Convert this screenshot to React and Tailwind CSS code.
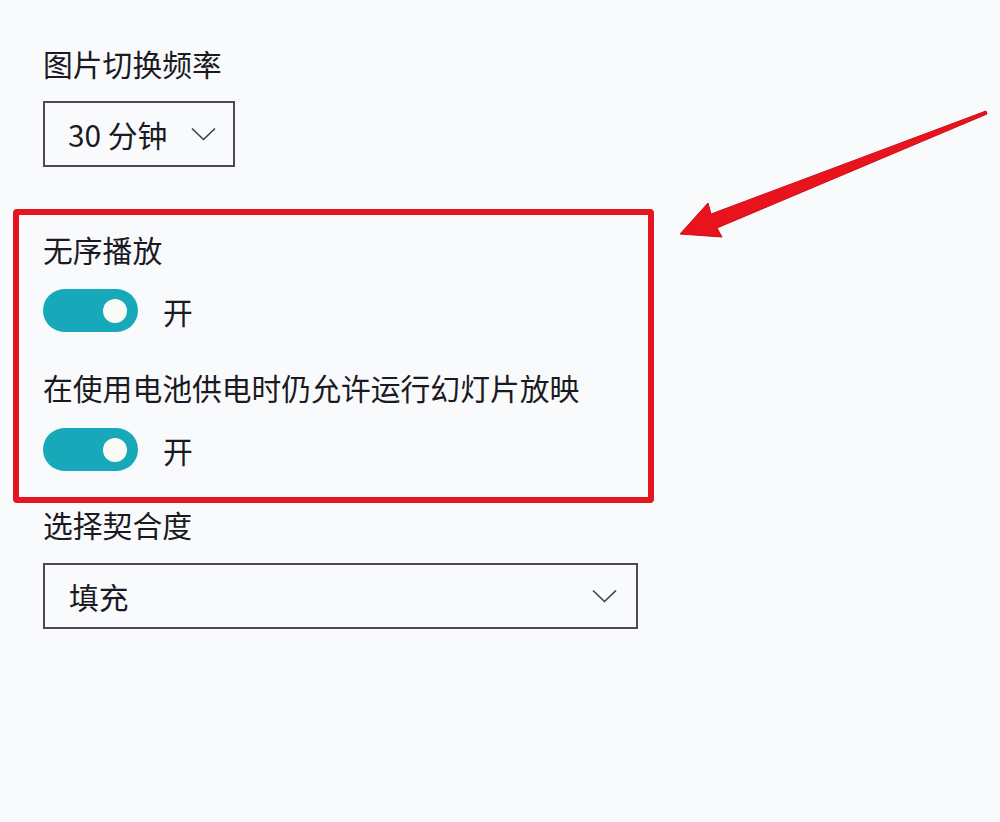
import React from "react";

// chevron used by both dropdowns
const Chevron = () => (
  <svg width="25" height="14" viewBox="0 0 25 14" fill="none">
    <polyline points="1,1.5 12.5,12.5 24,1.5" stroke="#3d3d48" strokeWidth="1.6" />
  </svg>
);

const Toggle = ({ label }) => (
  <div className="flex items-center gap-[25px]">
    <div className="flex h-[43px] w-[95px] items-center justify-end rounded-full bg-[#17a9b9] pr-[11px]">
      <div className="h-[24px] w-[24px] rounded-full bg-[#fbfbf6]" />
    </div>
    <span className="text-[29.8px] leading-[40px]">{label}</span>
  </div>
);

export default function App() {
  return (
    <div
      className="relative h-[822px] w-[1000px] overflow-hidden bg-[#f9fafc] text-[#1b1a22]"
      style={{ fontFamily: '"Noto Sans CJK SC", "Noto Sans", sans-serif' }}
    >
      <div className="flex flex-col pl-[43px] pt-[43px]">
        {/* 图片切换频率 */}
        <div className="text-[29.8px] leading-[40px]">图片切换频率</div>
        <div className="mt-[18px] flex h-[66px] w-[192px] items-center gap-[24px] border-2 border-[#4a4954] pl-[23px]">
          <span className="text-[29.8px] leading-[40px]">30 分钟</span>
          <Chevron />
        </div>

        {/* highlighted block */}
        <div className="-ml-[30px] mt-[42px] w-[641px] rounded-[4px] border-[6px] border-[#e5141e] pb-[26px] pl-[24px] pt-[14px]">
          <div className="text-[29.8px] leading-[40px]">无序播放</div>
          <div className="mt-[20px]">
            <Toggle label="开" />
          </div>
          <div className="mt-[35px] text-[29.8px] leading-[40px]">在使用电池供电时仍允许运行幻灯片放映</div>
          <div className="mt-[21px]">
            <Toggle label="开" />
          </div>
        </div>

        {/* 选择契合度 */}
        <div className="mt-[1px] text-[29.8px] leading-[40px]">选择契合度</div>
        <div className="mt-[19px] flex h-[66px] w-[595px] items-center justify-between border-2 border-[#4a4954] pl-[24px] pr-[19px]">
          <span className="text-[29.8px] leading-[40px]">填充</span>
          <Chevron />
        </div>
      </div>

      {/* annotation arrow */}
      <svg className="absolute left-0 top-0" width="1000" height="822" viewBox="0 0 1000 822">
        <polygon
          points="680,234 708,203 711,214 986,111 987,114 717,228 722,237"
          fill="#e8131c"
          stroke="#c81018"
          strokeWidth="1"
          strokeLinejoin="round"
        />
      </svg>
    </div>
  );
}
